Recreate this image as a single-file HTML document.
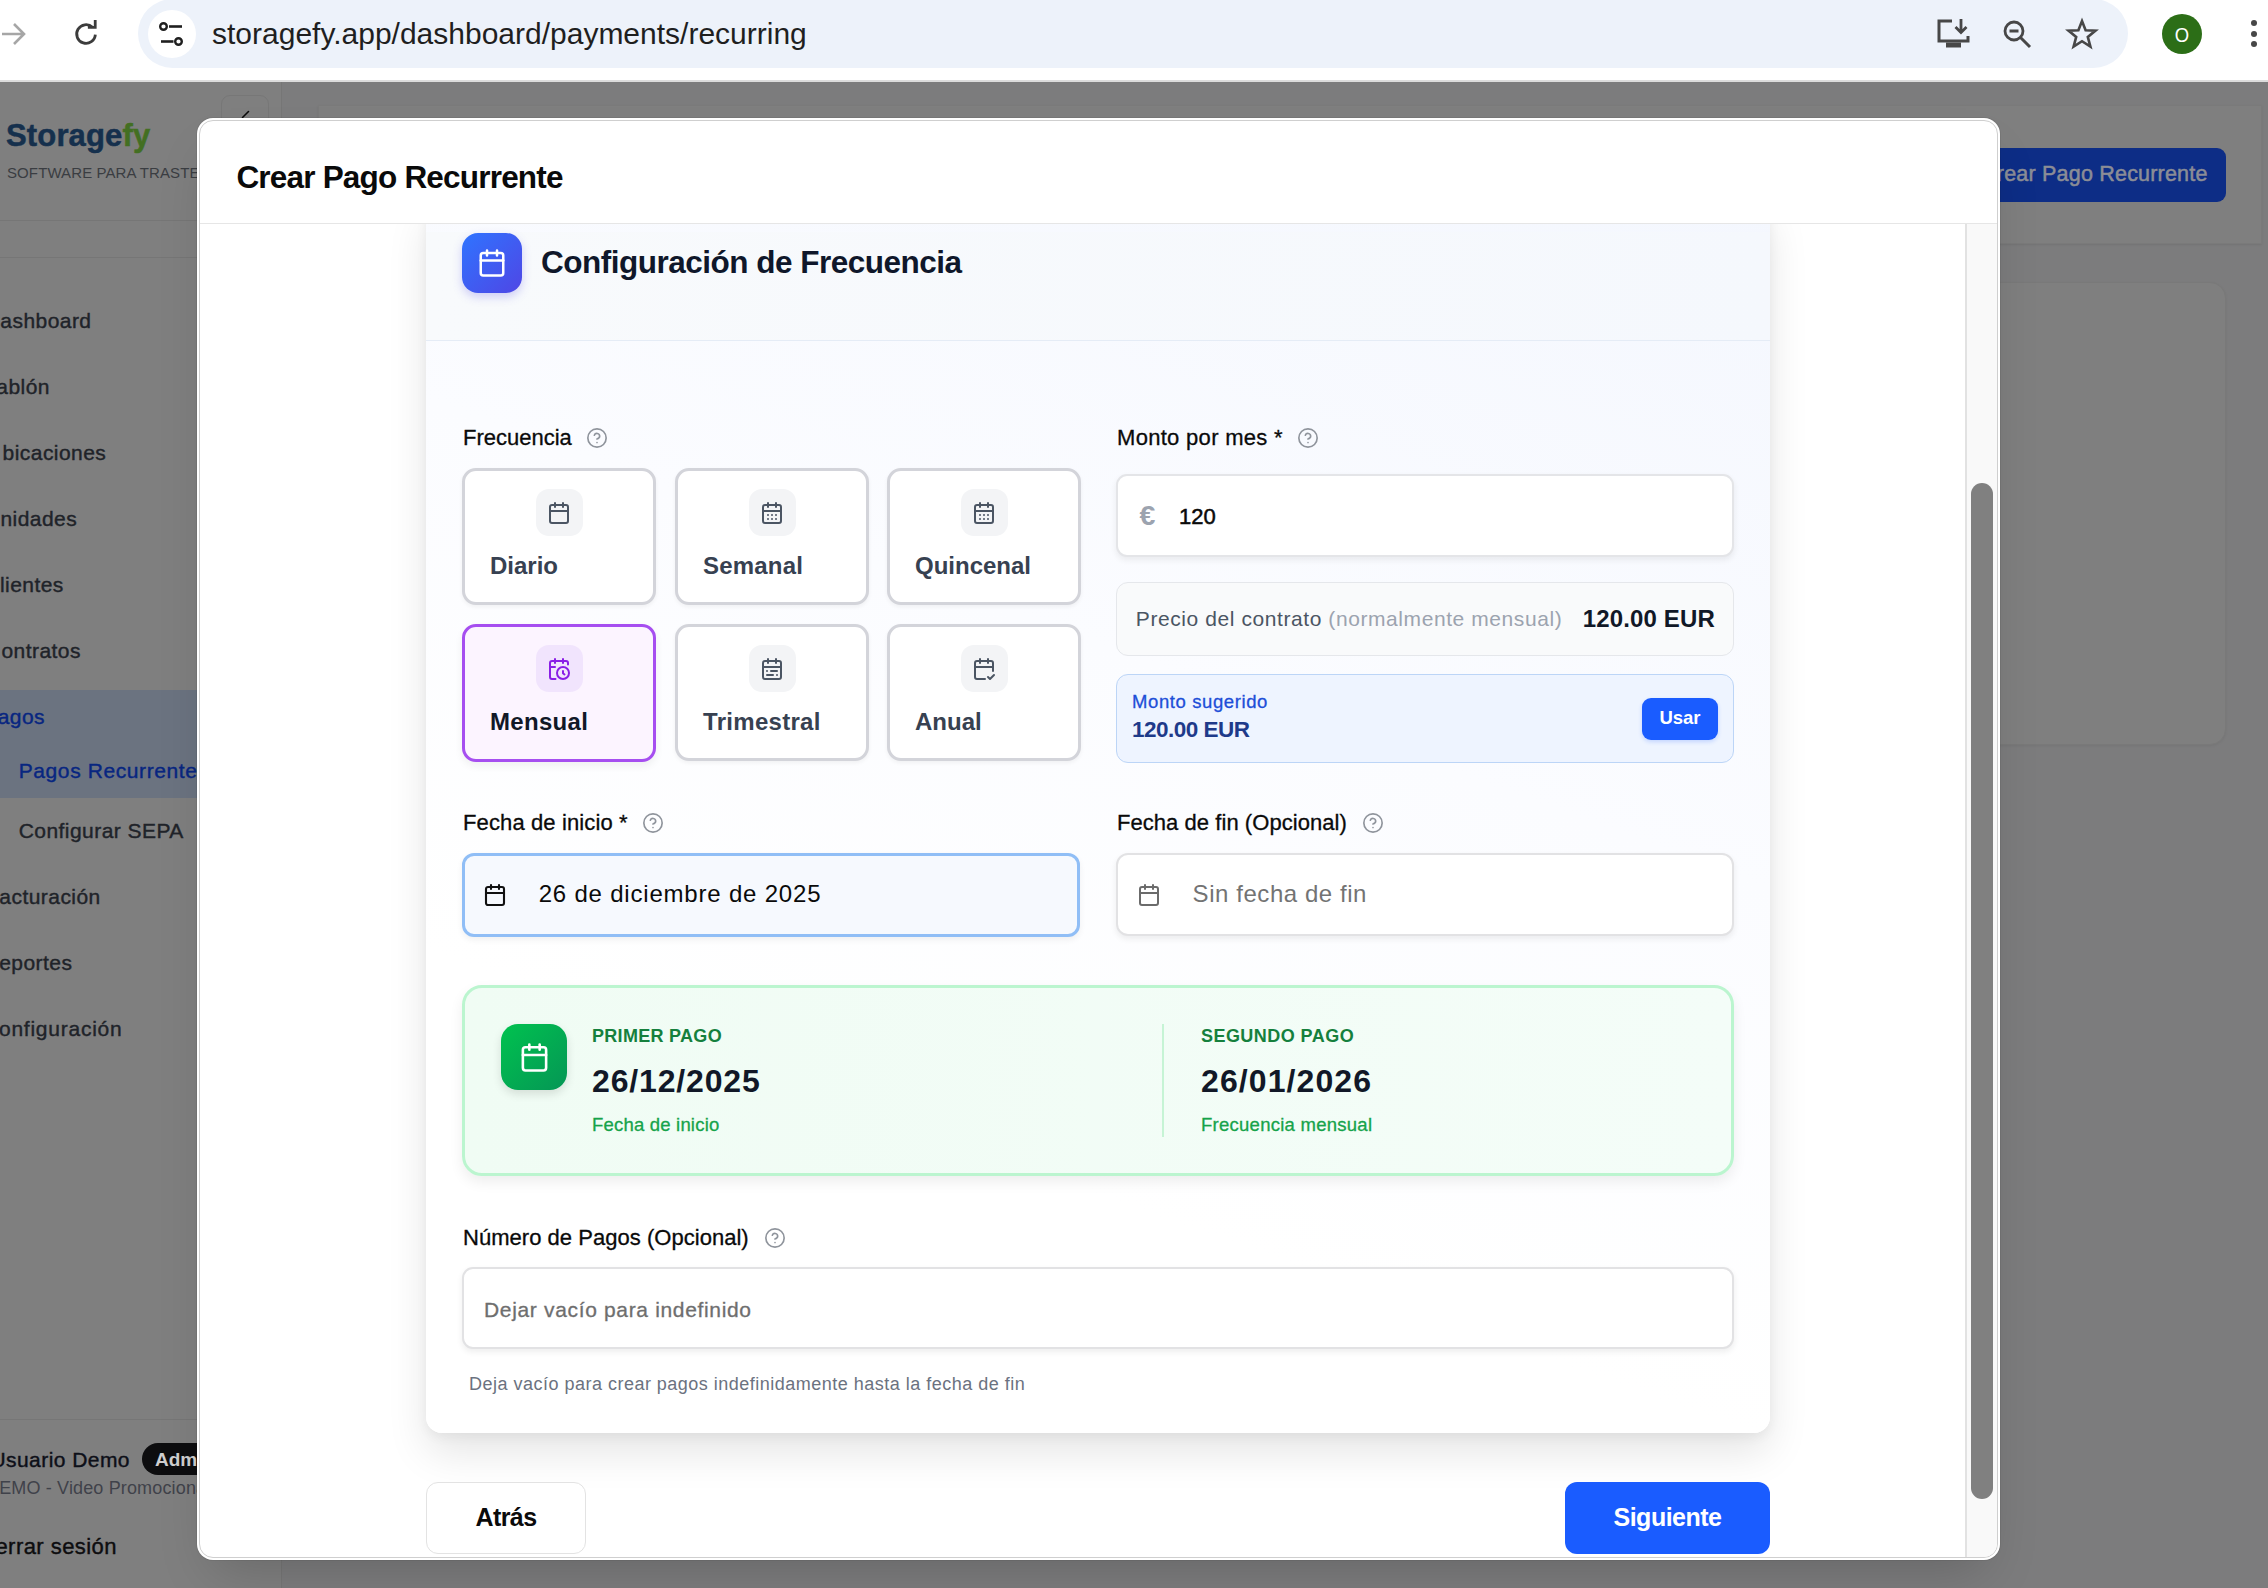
<!DOCTYPE html>
<html><head><meta charset="utf-8">
<style>
*{box-sizing:border-box;margin:0;padding:0}
html,body{width:2268px;height:1588px;overflow:hidden;background:#7c7c7d;font-family:"Liberation Sans",sans-serif;position:relative}
.a{position:absolute}
.t{position:absolute;line-height:1;white-space:nowrap}
svg{position:absolute;overflow:visible}
</style></head><body>
<div class="a" style="left:0px;top:0px;width:2268px;height:80px;background:#fff"></div>
<div class="a" style="left:0px;top:80px;width:2268px;height:2px;background:#dcdcdc"></div>
<div class="a" style="left:138px;top:-1px;width:1990px;height:69px;border-radius:35px;background:#edf2fa"></div>
<div class="a" style="left:148px;top:10px;width:48px;height:48px;border-radius:24px;background:#fff"></div>
<svg style="left:0;top:20px" width="28" height="28" viewBox="0 0 28 28"><path d="M2 14H24M14 4L24 14L14 24" stroke="#a6a6a6" stroke-width="2.6" fill="none"/></svg>
<svg style="left:72px;top:20px" width="28" height="28" viewBox="0 0 24 24"><path d="M20 12.5a8 8 0 1 1-2.4-6.2" stroke="#3c3c3c" stroke-width="2.4" fill="none"/><path d="M13.6 6.3H19.9V0" stroke="#3c3c3c" stroke-width="2.4" fill="none"/></svg>
<svg style="left:158px;top:22px" width="28" height="26" viewBox="0 0 28 26"><circle cx="5.5" cy="4.5" r="3.3" stroke="#1f1f1f" stroke-width="2.4" fill="none"/><path d="M11 4.5H24" stroke="#1f1f1f" stroke-width="2.6"/><path d="M3 19.5H15.5" stroke="#1f1f1f" stroke-width="2.6"/><circle cx="20.5" cy="19.5" r="3.3" stroke="#1f1f1f" stroke-width="2.4" fill="none"/></svg>
<div class="t" style="top:18.61px;font-size:30px;color:#1f1f1f;left:212px;">storagefy.app/dashboard/payments/recurring</div>
<svg style="left:1936px;top:18px" width="36" height="34" viewBox="0 0 36 34"><path d="M16 3H3V23H32V18" stroke="#474747" stroke-width="3" fill="none"/><path d="M10 27H25" stroke="#474747" stroke-width="5"/><path d="M25 1V14M19.5 9L25 14.5L30.5 9" stroke="#474747" stroke-width="2.8" fill="none"/></svg>
<svg style="left:2002px;top:19px" width="32" height="32" viewBox="0 0 32 32"><circle cx="12" cy="12" r="9" stroke="#474747" stroke-width="2.8" fill="none"/><path d="M7.5 12H16.5" stroke="#474747" stroke-width="3"/><path d="M18.5 18.5L28 28" stroke="#474747" stroke-width="3"/></svg>
<svg style="left:2066px;top:18px" width="32" height="32" viewBox="0 0 32 32"><path d="M16 3L19.6 12.2L29.5 12.6L21.8 18.9L24.4 28.6L16 23.2L7.6 28.6L10.2 18.9L2.5 12.6L12.4 12.2Z" stroke="#474747" stroke-width="2.6" fill="none"/></svg>
<div class="a" style="left:2162px;top:14px;width:40px;height:40px;border-radius:20px;background:#2c6e17"></div>
<div class="t" style="top:23.52px;font-size:21px;color:#fff;left:2182px;transform:translateX(-50%);transform:translateX(-50%) scale(0.88,1.0);">O</div>
<div class="a" style="left:2251px;top:19.7px;width:6px;height:6px;border-radius:3px;background:#474747"></div>
<div class="a" style="left:2251px;top:30.6px;width:6px;height:6px;border-radius:3px;background:#474747"></div>
<div class="a" style="left:2251px;top:41.4px;width:6px;height:6px;border-radius:3px;background:#474747"></div>
<div class="a" style="left:0px;top:82px;width:281px;height:1506px;background:#7f7f7f"></div>
<div class="a" style="left:281px;top:82px;width:1px;height:1506px;background:#767676"></div>
<div class="a" style="left:0px;top:220px;width:281px;height:1px;background:#767676"></div>
<div class="a" style="left:0px;top:257px;width:281px;height:1px;background:#767676"></div>
<div class="a" style="left:0px;top:1419px;width:281px;height:1px;background:#767676"></div>
<div class="a" style="left:221px;top:95px;width:48px;height:48px;border-radius:9px;border:1px solid #777"></div>
<svg style="left:236px;top:106px" width="16" height="16" viewBox="0 0 16 16"><path d="M12.5 5.5L6.5 11.5" stroke="#0a0a0a" stroke-width="1.6" stroke-linecap="round"/></svg>
<div class="a" style="left:318px;top:105px;width:1944px;height:139px;background:#7f7f7f;border:1px solid #7a7a7a;box-shadow:0 1px 2px rgba(0,0,0,0.08)"></div>
<div class="a" style="left:1900px;top:148px;width:326px;height:54px;border-radius:9px;background:#0d2d86"></div>
<div class="t" style="top:163.80px;font-size:21.5px;color:#8b8d96;letter-spacing:0.2px;-webkit-text-stroke:0.5px #8b8d96;right:60.40000000000009px;">Crear Pago Recurrente</div>
<div class="a" style="left:318px;top:282px;width:1908px;height:463px;background:#7f7f7f;border-radius:16px;border:1px solid #797979;box-shadow:0 1px 3px rgba(0,0,0,0.06)"></div>
<div class="t" style="left:6px;top:120px;font-size:31px;font-weight:bold;color:#15304d;letter-spacing:0.15px;-webkit-text-stroke:0.5px #15304d">Storage<span style="color:#436f22;-webkit-text-stroke:0.5px #436f22">fy</span></div>
<div class="t" style="top:165.30px;font-size:15px;color:#3a3d42;letter-spacing:0.1px;left:7px;">SOFTWARE PARA TRASTEROS</div>
<div class="t" style="top:310.22px;font-size:21px;color:#202329;letter-spacing:0.45px;-webkit-text-stroke:0.4px #202329;right:2176.5px;">ashboard</div>
<div class="t" style="top:376.22px;font-size:21px;color:#202329;letter-spacing:0.45px;-webkit-text-stroke:0.4px #202329;right:2218px;">ablón</div>
<div class="t" style="top:442.22px;font-size:21px;color:#202329;letter-spacing:0.45px;-webkit-text-stroke:0.4px #202329;right:2161.7px;">bicaciones</div>
<div class="t" style="top:508.22px;font-size:21px;color:#202329;letter-spacing:0.45px;-webkit-text-stroke:0.4px #202329;right:2190.8px;">nidades</div>
<div class="t" style="top:574.22px;font-size:21px;color:#202329;letter-spacing:0.45px;-webkit-text-stroke:0.4px #202329;right:2204.2px;">lientes</div>
<div class="t" style="top:640.22px;font-size:21px;color:#202329;letter-spacing:0.45px;-webkit-text-stroke:0.4px #202329;right:2187.1px;">ontratos</div>
<div class="a" style="left:0px;top:690px;width:281px;height:108px;background:#6b7380"></div>
<div class="t" style="top:706.22px;font-size:21px;color:#082680;letter-spacing:0.45px;-webkit-text-stroke:0.4px #082680;right:2223px;">agos</div>
<div class="t" style="top:759.72px;font-size:21px;color:#082680;letter-spacing:0.6px;-webkit-text-stroke:0.4px #082680;left:18.7px;">Pagos Recurrentes</div>
<div class="t" style="top:819.82px;font-size:21px;color:#202329;letter-spacing:0.45px;-webkit-text-stroke:0.4px #202329;left:18.7px;">Configurar SEPA</div>
<div class="t" style="top:886.22px;font-size:21px;color:#202329;letter-spacing:0.45px;-webkit-text-stroke:0.4px #202329;right:2167.3px;">acturación</div>
<div class="t" style="top:952.22px;font-size:21px;color:#202329;letter-spacing:0.45px;-webkit-text-stroke:0.4px #202329;right:2195.6px;">eportes</div>
<div class="t" style="top:1018.22px;font-size:21px;color:#202329;letter-spacing:0.75px;-webkit-text-stroke:0.4px #202329;left:-1px;">onfiguración</div>
<div class="t" style="top:1449.22px;font-size:21px;color:#0d0f18;letter-spacing:0.45px;-webkit-text-stroke:0.4px #0d0f18;right:2138px;">Usuario Demo</div>
<div class="a" style="left:142px;top:1443px;width:80px;height:32px;border-radius:16px;background:#0d0d0f"></div>
<div class="t" style="top:1449.92px;font-size:19px;color:#cfcfcf;font-weight:bold;left:155px;">Admin</div>
<div class="t" style="top:1478.76px;font-size:18px;color:#3f424a;letter-spacing:0.15px;left:-14px;">DEMO - Video Promocional</div>
<div class="t" style="top:1536.38px;font-size:22px;color:#0d0d0f;letter-spacing:0.45px;-webkit-text-stroke:0.4px #0d0d0f;right:2151px;">errar sesión</div>
<div class="a" style="left:197px;top:118px;width:1803px;height:1442px;background:#fff;border-radius:16px;box-shadow:0 0 0 1px rgba(0,0,0,0.06),0 25px 50px -16px rgba(0,0,0,0.18)"></div>
<div class="a" style="left:199px;top:120px;width:1799px;height:1438px;border-radius:14px;border:1px solid #cfcfcf"></div>
<div class="t" style="top:162.34px;font-size:31.5px;color:#0a0a0a;font-weight:bold;letter-spacing:-0.8px;left:236.4px;">Crear Pago Recurrente</div>
<div class="a" style="left:200px;top:223px;width:1797px;height:1px;background:#e6e6e6"></div>
<div class="a" style="left:1965px;top:224px;width:32px;height:1333px;background:#f9f9f9;border-left:2px solid #e2e2e2;border-bottom-right-radius:14px"></div>
<div class="a" style="left:1971px;top:483px;width:22px;height:1016px;border-radius:11px;background:#808080"></div>
<div class="a" style="left:426px;top:200px;width:1344px;height:1233px;background:linear-gradient(200deg,#f4f7fe 0%,#fbfcff 40%,#ffffff 72%);border-radius:16px;box-shadow:0 20px 40px rgba(0,0,0,0.10),0 4px 12px rgba(0,0,0,0.05);clip-path:inset(24px -60px -60px -60px)"></div>
<div class="a" style="left:426px;top:232px;width:1344px;height:109px;background:linear-gradient(90deg,#f8fafc,#f5f8fd);border-bottom:1px solid #e5ecf6"></div>
<div class="a" style="left:462px;top:233px;width:60px;height:60px;border-radius:16px;background:linear-gradient(135deg,#2f74ff,#4f46e5);box-shadow:0 4px 10px rgba(79,70,229,0.25)"></div>
<svg style="left:477px;top:248px" width="30" height="30" viewBox="0 0 24 24" fill="none" stroke="#fff" stroke-width="2" stroke-linecap="round" stroke-linejoin="round"><path d="M8 2v4"/><path d="M16 2v4"/><rect width="18" height="18" x="3" y="4" rx="2"/><path d="M3 10h18"/></svg>
<div class="t" style="top:246.74px;font-size:31.5px;color:#0f172a;font-weight:bold;letter-spacing:-0.5px;left:541px;">Configuración de Frecuencia</div>
<div class="t" style="top:427.18px;font-size:22px;color:#0a0a0a;-webkit-text-stroke:0.3px #0a0a0a;left:463px;">Frecuencia</div>
<svg style="left:586px;top:427.0px" width="22" height="22" viewBox="0 0 24 24" fill="none" stroke="#8f949c" stroke-width="1.8" stroke-linecap="round" stroke-linejoin="round"><circle cx="12" cy="12" r="10"/><path d="M9.09 9a3 3 0 0 1 5.83 1c0 2-3 3-3 3"/><path d="M12 17h.01"/></svg>
<div class="a" style="left:462px;top:468px;width:194px;height:137px;border-radius:14px;border:3px solid #d3d4da;background:#fff;box-shadow:0 2px 4px rgba(0,0,0,0.05)"></div>
<div class="a" style="left:535.5px;top:489px;width:47px;height:47px;border-radius:13px;background:#f3f4f6"></div>
<svg style="left:547.0px;top:501px" width="24" height="24" viewBox="0 0 24 24" fill="none" stroke="#4b5563" stroke-width="2" stroke-linecap="round" stroke-linejoin="round"><path d="M8 2v4"/><path d="M16 2v4"/><rect width="18" height="18" x="3" y="4" rx="2"/><path d="M3 10h18"/></svg>
<div class="t" style="top:554.38px;font-size:24px;color:#374151;font-weight:bold;left:490px;">Diario</div>
<div class="a" style="left:675px;top:468px;width:194px;height:137px;border-radius:14px;border:3px solid #d3d4da;background:#fff;box-shadow:0 2px 4px rgba(0,0,0,0.05)"></div>
<div class="a" style="left:748.5px;top:489px;width:47px;height:47px;border-radius:13px;background:#f3f4f6"></div>
<svg style="left:760.0px;top:501px" width="24" height="24" viewBox="0 0 24 24" fill="none" stroke="#4b5563" stroke-width="2" stroke-linecap="round" stroke-linejoin="round"><path d="M8 2v4"/><path d="M16 2v4"/><rect width="18" height="18" x="3" y="4" rx="2"/><path d="M3 10h18"/><path d="M8 14h.01"/><path d="M12 14h.01"/><path d="M16 14h.01"/><path d="M8 18h.01"/><path d="M12 18h.01"/><path d="M16 18h.01"/></svg>
<div class="t" style="top:554.38px;font-size:24px;color:#374151;font-weight:bold;letter-spacing:0.2px;left:703px;">Semanal</div>
<div class="a" style="left:887px;top:468px;width:194px;height:137px;border-radius:14px;border:3px solid #d3d4da;background:#fff;box-shadow:0 2px 4px rgba(0,0,0,0.05)"></div>
<div class="a" style="left:960.5px;top:489px;width:47px;height:47px;border-radius:13px;background:#f3f4f6"></div>
<svg style="left:972.0px;top:501px" width="24" height="24" viewBox="0 0 24 24" fill="none" stroke="#4b5563" stroke-width="2" stroke-linecap="round" stroke-linejoin="round"><path d="M8 2v4"/><path d="M16 2v4"/><rect width="18" height="18" x="3" y="4" rx="2"/><path d="M3 10h18"/><path d="M8 14h.01"/><path d="M12 14h.01"/><path d="M16 14h.01"/><path d="M8 18h.01"/><path d="M12 18h.01"/><path d="M16 18h.01"/></svg>
<div class="t" style="top:554.38px;font-size:24px;color:#374151;font-weight:bold;left:915px;">Quincenal</div>
<div class="a" style="left:462px;top:624px;width:194px;height:138px;border-radius:14px;border:3px solid #a64ef0;background:#fcf4ff;box-shadow:0 4px 8px rgba(0,0,0,0.06)"></div>
<div class="a" style="left:535.5px;top:645px;width:47px;height:47px;border-radius:13px;background:#f1e4fd"></div>
<svg style="left:547.0px;top:657px" width="24" height="24" viewBox="0 0 24 24" fill="none" stroke="#8a1ee6" stroke-width="2" stroke-linecap="round" stroke-linejoin="round"><path d="M21 7.5V6a2 2 0 0 0-2-2H5a2 2 0 0 0-2 2v14a2 2 0 0 0 2 2h3.5"/><path d="M16 2v4"/><path d="M8 2v4"/><path d="M3 10h5"/><path d="M17.5 17.5 16 16.3V14"/><circle cx="16" cy="16" r="6"/></svg>
<div class="t" style="top:710.38px;font-size:24px;color:#111827;font-weight:bold;letter-spacing:0.3px;left:490px;">Mensual</div>
<div class="a" style="left:675px;top:624px;width:194px;height:137px;border-radius:14px;border:3px solid #d3d4da;background:#fff;box-shadow:0 2px 4px rgba(0,0,0,0.05)"></div>
<div class="a" style="left:748.5px;top:645px;width:47px;height:47px;border-radius:13px;background:#f3f4f6"></div>
<svg style="left:760.0px;top:657px" width="24" height="24" viewBox="0 0 24 24" fill="none" stroke="#4b5563" stroke-width="2" stroke-linecap="round" stroke-linejoin="round"><path d="M8 2v4"/><path d="M16 2v4"/><rect width="18" height="18" x="3" y="4" rx="2"/><path d="M3 10h18"/><path d="M17 14h-6"/><path d="M13 18H7"/><path d="M7 14h.01"/><path d="M17 18h.01"/></svg>
<div class="t" style="top:710.38px;font-size:24px;color:#374151;font-weight:bold;letter-spacing:0.3px;left:703px;">Trimestral</div>
<div class="a" style="left:887px;top:624px;width:194px;height:137px;border-radius:14px;border:3px solid #d3d4da;background:#fff;box-shadow:0 2px 4px rgba(0,0,0,0.05)"></div>
<div class="a" style="left:960.5px;top:645px;width:47px;height:47px;border-radius:13px;background:#f3f4f6"></div>
<svg style="left:972.0px;top:657px" width="24" height="24" viewBox="0 0 24 24" fill="none" stroke="#4b5563" stroke-width="2" stroke-linecap="round" stroke-linejoin="round"><path d="M8 2v4"/><path d="M16 2v4"/><path d="M21 14V6a2 2 0 0 0-2-2H5a2 2 0 0 0-2 2v14a2 2 0 0 0 2 2h8"/><path d="M3 10h18"/><path d="m16 20 2 2 4-4"/></svg>
<div class="t" style="top:710.38px;font-size:24px;color:#374151;font-weight:bold;left:915px;">Anual</div>
<div class="t" style="top:427.18px;font-size:22px;color:#0a0a0a;letter-spacing:0.3px;-webkit-text-stroke:0.3px #0a0a0a;left:1117px;">Monto por mes *</div>
<svg style="left:1297px;top:427.0px" width="22" height="22" viewBox="0 0 24 24" fill="none" stroke="#8f949c" stroke-width="1.8" stroke-linecap="round" stroke-linejoin="round"><circle cx="12" cy="12" r="10"/><path d="M9.09 9a3 3 0 0 1 5.83 1c0 2-3 3-3 3"/><path d="M12 17h.01"/></svg>
<div class="a" style="left:1116px;top:474px;width:618px;height:83px;border-radius:11px;border:2px solid #e4e5e8;background:#fff;box-shadow:0 3px 6px rgba(0,0,0,0.07)"></div>
<div class="t" style="top:500.87px;font-size:28.5px;color:#9ca3af;font-weight:bold;left:1139.5px;">€</div>
<div class="t" style="top:505.58px;font-size:22px;color:#0a0a0a;-webkit-text-stroke:0.5px #0a0a0a;left:1179px;">120</div>
<div class="a" style="left:1116px;top:582px;width:618px;height:74px;border-radius:12px;border:1px solid #e5e7eb;background:#f9fafb"></div>
<div class="t" style="top:608.22px;font-size:21px;color:#4b5563;letter-spacing:0.58px;left:1135.8px;">Precio del contrato <span style="color:#9ca3af">(normalmente mensual)</span></div>
<div class="t" style="top:606.58px;font-size:24px;color:#111827;font-weight:bold;letter-spacing:0.16px;right:553px;">120.00 EUR</div>
<div class="a" style="left:1116px;top:674px;width:618px;height:89px;border-radius:12px;border:1px solid #bcd5f7;background:#eef4ff"></div>
<div class="t" style="top:692.84px;font-size:18.5px;color:#1d4ed8;letter-spacing:0.6px;-webkit-text-stroke:0.3px #1d4ed8;left:1132px;">Monto sugerido</div>
<div class="t" style="top:719.45px;font-size:22.5px;color:#1e3a8a;font-weight:bold;letter-spacing:-0.5px;left:1132px;">120.00 EUR</div>
<div class="a" style="left:1642px;top:698px;width:76px;height:42px;border-radius:9px;background:#1a5cff;box-shadow:0 2px 4px rgba(26,92,255,0.2)"></div>
<div class="t" style="top:709.14px;font-size:18.5px;color:#fff;font-weight:bold;left:1680px;transform:translateX(-50%);">Usar</div>
<div class="t" style="top:812.38px;font-size:22px;color:#0a0a0a;letter-spacing:0.12px;-webkit-text-stroke:0.3px #0a0a0a;left:463px;">Fecha de inicio *</div>
<svg style="left:642px;top:812.2px" width="22" height="22" viewBox="0 0 24 24" fill="none" stroke="#8f949c" stroke-width="1.8" stroke-linecap="round" stroke-linejoin="round"><circle cx="12" cy="12" r="10"/><path d="M9.09 9a3 3 0 0 1 5.83 1c0 2-3 3-3 3"/><path d="M12 17h.01"/></svg>
<div class="a" style="left:462px;top:853px;width:618px;height:84px;border-radius:12px;border:3px solid #90bef6;background:#f6f9fe;box-shadow:0 3px 6px rgba(0,0,0,0.06)"></div>
<svg style="left:483px;top:883px" width="24" height="24" viewBox="0 0 24 24" fill="none" stroke="#111" stroke-width="2.1" stroke-linecap="round" stroke-linejoin="round"><path d="M8 2v4"/><path d="M16 2v4"/><rect width="18" height="18" x="3" y="4" rx="2"/><path d="M3 10h18"/></svg>
<div class="t" style="top:882.28px;font-size:24px;color:#0a0a0a;letter-spacing:0.8px;left:538.7px;">26 de diciembre de 2025</div>
<div class="t" style="top:812.38px;font-size:22px;color:#0a0a0a;letter-spacing:0.05px;-webkit-text-stroke:0.3px #0a0a0a;left:1117px;">Fecha de fin (Opcional)</div>
<svg style="left:1362px;top:812.2px" width="22" height="22" viewBox="0 0 24 24" fill="none" stroke="#8f949c" stroke-width="1.8" stroke-linecap="round" stroke-linejoin="round"><circle cx="12" cy="12" r="10"/><path d="M9.09 9a3 3 0 0 1 5.83 1c0 2-3 3-3 3"/><path d="M12 17h.01"/></svg>
<div class="a" style="left:1116px;top:853px;width:618px;height:83px;border-radius:12px;border:2px solid #e2e2e4;background:#fff;box-shadow:0 3px 6px rgba(0,0,0,0.07)"></div>
<svg style="left:1137px;top:883px" width="24" height="24" viewBox="0 0 24 24" fill="none" stroke="#6b6b6b" stroke-width="2" stroke-linecap="round" stroke-linejoin="round"><path d="M8 2v4"/><path d="M16 2v4"/><rect width="18" height="18" x="3" y="4" rx="2"/><path d="M3 10h18"/></svg>
<div class="t" style="top:882.18px;font-size:24px;color:#737373;letter-spacing:0.56px;left:1192.6px;">Sin fecha de fin</div>
<div class="a" style="left:462px;top:985px;width:1272px;height:191px;border-radius:20px;border:3px solid #bbf5cf;background:linear-gradient(90deg,#f0fcf4,#f4fdf8);box-shadow:0 6px 14px rgba(0,0,0,0.07)"></div>
<div class="a" style="left:501px;top:1024px;width:66px;height:66px;border-radius:17px;background:linear-gradient(135deg,#00c24f,#059655);box-shadow:0 4px 10px rgba(0,0,0,0.12)"></div>
<svg style="left:518.5px;top:1041.5px" width="31" height="31" viewBox="0 0 24 24" fill="none" stroke="#fff" stroke-width="2" stroke-linecap="round" stroke-linejoin="round"><path d="M8 2v4"/><path d="M16 2v4"/><rect width="18" height="18" x="3" y="4" rx="2"/><path d="M3 10h18"/></svg>
<div class="t" style="top:1026.66px;font-size:18px;color:#15803d;font-weight:bold;letter-spacing:0.3px;left:592px;">PRIMER PAGO</div>
<div class="t" style="top:1065.01px;font-size:32px;color:#111827;font-weight:bold;letter-spacing:0.85px;left:592px;">26/12/2025</div>
<div class="t" style="top:1116.04px;font-size:18.5px;color:#16a34a;letter-spacing:0.2px;-webkit-text-stroke:0.3px #16a34a;left:592px;">Fecha de inicio</div>
<div class="t" style="top:1026.66px;font-size:18px;color:#15803d;font-weight:bold;letter-spacing:0.45px;left:1201px;">SEGUNDO PAGO</div>
<div class="t" style="top:1065.01px;font-size:32px;color:#111827;font-weight:bold;letter-spacing:1.1px;left:1201px;">26/01/2026</div>
<div class="t" style="top:1116.04px;font-size:18.5px;color:#16a34a;letter-spacing:0.26px;-webkit-text-stroke:0.3px #16a34a;left:1201px;">Frecuencia mensual</div>
<div class="a" style="left:1162px;top:1024px;width:2px;height:113px;background:#c6f4d5"></div>
<div class="t" style="top:1226.68px;font-size:22px;color:#0a0a0a;letter-spacing:0.03px;-webkit-text-stroke:0.3px #0a0a0a;left:463px;">Número de Pagos (Opcional)</div>
<svg style="left:764px;top:1226.5px" width="22" height="22" viewBox="0 0 24 24" fill="none" stroke="#8f949c" stroke-width="1.8" stroke-linecap="round" stroke-linejoin="round"><circle cx="12" cy="12" r="10"/><path d="M9.09 9a3 3 0 0 1 5.83 1c0 2-3 3-3 3"/><path d="M12 17h.01"/></svg>
<div class="a" style="left:462px;top:1267px;width:1272px;height:82px;border-radius:11px;border:2px solid #e2e2e4;background:#fff;box-shadow:0 3px 6px rgba(0,0,0,0.07)"></div>
<div class="t" style="top:1298.92px;font-size:21px;color:#6e6e6e;letter-spacing:0.66px;-webkit-text-stroke:0.3px #6e6e6e;left:484px;">Dejar vacío para indefinido</div>
<div class="t" style="top:1374.66px;font-size:18px;color:#6b7280;letter-spacing:0.49px;left:469px;">Deja vacío para crear pagos indefinidamente hasta la fecha de fin</div>
<div class="a" style="left:426px;top:1482px;width:160px;height:72px;border-radius:12px;border:1px solid #e3e3e3;background:#fff"></div>
<div class="t" style="top:1504.84px;font-size:25px;color:#0a0a0a;font-weight:bold;letter-spacing:-0.6px;left:506px;transform:translateX(-50%);">Atrás</div>
<div class="a" style="left:1565px;top:1482px;width:205px;height:72px;border-radius:12px;background:#1a5cff"></div>
<div class="t" style="top:1504.84px;font-size:25px;color:#fff;font-weight:bold;letter-spacing:-0.5px;left:1667.5px;transform:translateX(-50%);">Siguiente</div>
</body></html>
